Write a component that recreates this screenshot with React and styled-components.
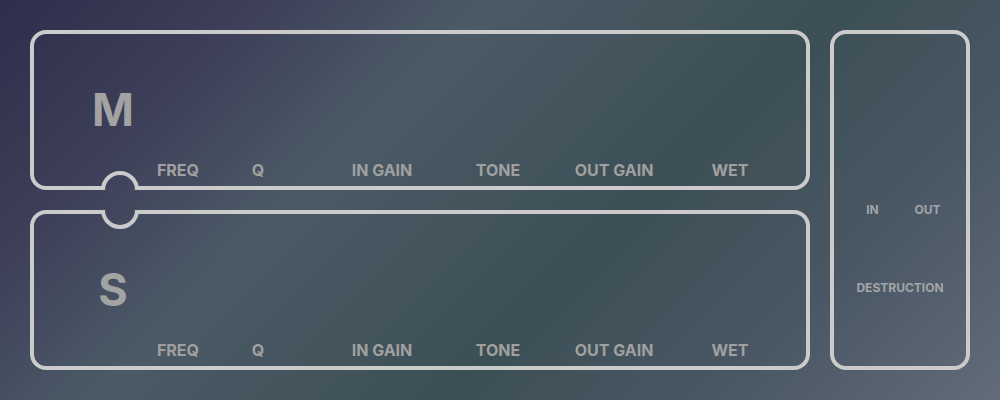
import styled, { createGlobalStyle, css } from "styled-components";

const backdrop = css`
  background: linear-gradient(
    135deg,
    #2f2e4b 0%,
    #3c3d57 17%,
    #4b5a66 35%,
    #3c4f55 60%,
    #4a5764 80%,
    #626c7a 100%
  );
  background-attachment: fixed;
`;

const Global = createGlobalStyle`
  html, body {
    margin: 0;
    height: 100%;
  }
  body {
    ${backdrop}
    font-family: Inter, "Noto Sans", sans-serif;
  }
`;

const Page = styled.div`
  display: flex;
  gap: 20px;
  padding: 30px;
  height: 400px;
  box-sizing: border-box;
`;

const Column = styled.div`
  display: flex;
  flex-direction: column;
  gap: 20px;
  width: 780px;
`;

const Panel = styled.div`
  position: relative;
  display: flex;
  flex-direction: column;
  height: 160px;
  box-sizing: border-box;
  border: 4px solid #cbcbcb;
  border-radius: 16px;
`;

// half-round cut-out joining the two channel panels
const Notch = styled.div`
  position: absolute;
  left: 67px;
  width: 38px;
  height: 38px;
  box-sizing: border-box;
  border: 4px solid #cbcbcb;
  border-radius: 50%;
  ${backdrop}
  ${(p) =>
    p.$side === "bottom"
      ? css`
          bottom: -23px;
          clip-path: inset(0 0 19px 0);
        `
      : css`
          top: -23px;
          clip-path: inset(19px 0 0 0);
        `}
`;

const Channel = styled.div`
  width: 60px;
  margin: 53px 0 0 49px;
  text-align: center;
  font-size: 45px;
  line-height: 46px;
  font-weight: 700;
  color: #a3a3a3;
`;

const LabelRow = styled.div`
  display: flex;
  margin: auto 0 7px 104px;
`;

const Label = styled.div`
  width: ${(p) => p.$w}px;
  margin-left: ${(p) => p.$ml || 0}px;
  text-align: center;
  font-size: 16px;
  line-height: 18px;
  font-weight: 700;
  color: #a0a0a0;
  white-space: nowrap;
`;

const Side = styled.div`
  display: flex;
  flex-direction: column;
  align-items: center;
  width: 140px;
  box-sizing: border-box;
  border: 4px solid #cbcbcb;
  border-radius: 16px;
  padding-top: 168px;
`;

const MeterRow = styled.div`
  display: flex;
`;

const Small = styled.div`
  width: ${(p) => p.$w || "auto"};
  margin-top: ${(p) => p.$mt || 0}px;
  text-align: center;
  font-size: 12px;
  line-height: 15px;
  font-weight: 700;
  color: #a2a5a9;
`;

const labels = [
  { t: "FREQ", w: 80 },
  { t: "Q", w: 80 },
  { t: "IN GAIN", w: 116, ml: 26 },
  { t: "TONE", w: 116 },
  { t: "OUT GAIN", w: 116 },
  { t: "WET", w: 116 },
];

function Strip({ name, notch }) {
  return (
    <Panel>
      <Notch $side={notch} />
      <Channel>{name}</Channel>
      <LabelRow>
        {labels.map((l) => (
          <Label key={l.t} $w={l.w} $ml={l.ml}>
            {l.t}
          </Label>
        ))}
      </LabelRow>
    </Panel>
  );
}

export default function App() {
  return (
    <>
      <Global />
      <Page>
        <Column>
          <Strip name="M" notch="bottom" />
          <Strip name="S" notch="top" />
        </Column>
        <Side>
          <MeterRow>
            <Small $w="55px">IN</Small>
            <Small $w="55px">OUT</Small>
          </MeterRow>
          <Small $mt={63}>DESTRUCTION</Small>
        </Side>
      </Page>
    </>
  );
}
